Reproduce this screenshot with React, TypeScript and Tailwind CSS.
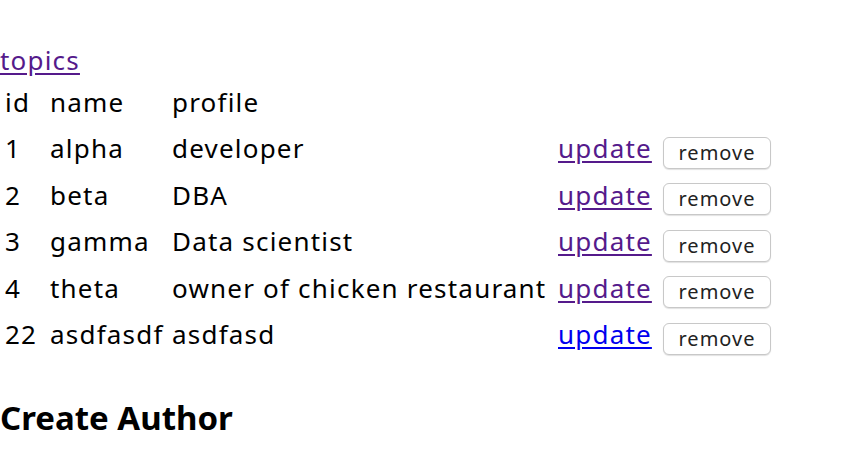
const authors = [
  { id: 1, name: 'alpha', profile: 'developer', visited: true },
  { id: 2, name: 'beta', profile: 'DBA', visited: true },
  { id: 3, name: 'gamma', profile: 'Data scientist', visited: true },
  { id: 4, name: 'theta', profile: 'owner of chicken restaurant', visited: true },
  { id: 22, name: 'asdfasdf', profile: 'asdfasd', visited: false },
]

export default function App() {
  return (
    <div className="w-[860px] h-[464px] overflow-hidden bg-white text-black font-['Noto_Sans',sans-serif] text-[26px]">
      <div className="pt-[38px] leading-[44px] tracking-[1.2px]">
        <a href="#" className="text-[#551a8b] underline underline-offset-[3px]">
          topics
        </a>
      </div>
      <table className="border-separate border-spacing-[3px] -mt-[4px] tracking-[1.2px]">
        <tbody>
          <tr>
            <td className="w-[42px] px-[2px] py-[2px] leading-[39px]">id</td>
            <td className="w-[119px] px-[2px] py-[2px] leading-[39px]">name</td>
            <td className="w-[383px] px-[2px] py-[2px] leading-[39px]">profile</td>
            <td className="w-[102px]"></td>
            <td></td>
          </tr>
          {authors.map((a) => (
            <tr key={a.id}>
              <td className="px-[2px] py-[2px] leading-[39px]">{a.id}</td>
              <td className="px-[2px] py-[2px] leading-[39px]">{a.name}</td>
              <td className="px-[2px] py-[2px] leading-[39px]">{a.profile}</td>
              <td className="px-[2px] py-[2px] leading-[39px]">
                <a
                  href="#"
                  className={`underline underline-offset-[3px] ${a.visited ? 'text-[#551a8b]' : 'text-[#0000ee]'}`}
                >
                  update
                </a>
              </td>
              <td className="px-[2px] py-[2px] leading-[39px] align-middle">
                <button className="w-[108px] h-[32px] mt-[3px] rounded-[6px] border border-[#c8c8c8] bg-white text-[20px] tracking-[1px] leading-none text-[#222] shadow-[0_1px_1px_rgba(0,0,0,0.12)] align-middle">
                  remove
                </button>
              </td>
            </tr>
          ))}
        </tbody>
      </table>
      <h2 className="mt-[38px] text-[33px] font-bold leading-[40px]">Create Author</h2>
    </div>
  )
}
